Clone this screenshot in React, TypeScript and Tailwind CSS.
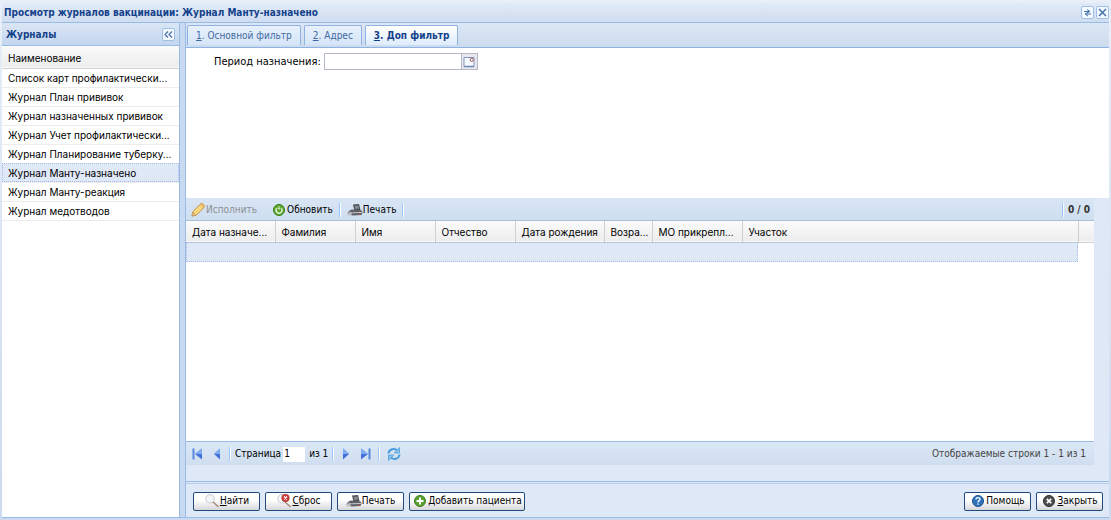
import { useState, type ReactNode } from "react";
import clsx from "clsx";

const journals = [
  "Список карт профилактически...",
  "Журнал План прививок",
  "Журнал назначенных прививок",
  "Журнал Учет профилактически...",
  "Журнал Планирование туберку...",
  "Журнал Манту-назначено",
  "Журнал Манту-реакция",
  "Журнал медотводов"
];

const tabs = [
  { key: "1", label: "Основной фильтр" },
  { key: "2", label: "Адрес" },
  { key: "3", label: "Доп фильтр" }
];

const columns = [
  { label: "Дата назначе...", width: "w-[89px]" },
  { label: "Фамилия", width: "w-20" },
  { label: "Имя", width: "w-20" },
  { label: "Отчество", width: "w-20" },
  { label: "Дата рождения", width: "w-[89px]" },
  { label: "Возра...", width: "w-12" },
  { label: "МО прикрепл...", width: "w-[90px]" },
  { label: "Участок", width: "w-auto" }
];

const uiFont = "font-['DejaVu_Sans_Condensed','DejaVu_Sans',sans-serif] [font-stretch:condensed]";
const gridFont = "font-[Inter,Arial,sans-serif]";

function PencilIcon() {
  return (
    <svg className="size-4 shrink-0" viewBox="0 0 16 16">
      <path d="M2 14l1.2-4.6L10.600 2q1.200-1 2.400.200l.9.900q1 1.200 0 2.300L6.500 12.900z" fill="#f8cf67" stroke="#c58a33" />
      <path d="M4 10.500l7.500-7.500M5.800 12l7.200-7.300" stroke="#fff0b5" />
      <path d="M2 14l.9-3.300 2.600 2.400z" fill="#f5e2c4" stroke="#b98243" strokeWidth=".6" />
      <path d="M10.300 2.600l3.300 3.200" stroke="#d8a35a" />
    </svg>
  );
}

function RefreshGreenIcon() {
  return (
    <svg className="size-4 shrink-0" viewBox="0 0 16 16">
      <circle cx="8" cy="8" r="5.500" fill="#59a32b" stroke="#3b7f1b" />
      <path d="M5.700 6.200A3 3 0 1 0 10.500 6.400" fill="none" stroke="#e9f7de" strokeWidth="1.300" />
      <path d="M8 4v3M6.300 5.700L8 7.400l1.700-1.700" fill="none" stroke="#d9f2c5" />
    </svg>
  );
}

function PrinterIcon() {
  return (
    <svg className="size-4 shrink-0" viewBox="0 0 16 16">
      <path d="M6 2.500l6-.5 1.500 6-6 1z" fill="#4c4f55" />
      <path d="M7.500 4l3.800-.4.800 3-3.600.5z" fill="#878c94" />
      <path d="M1 9.500l3.500-2 10 .7 1 2.300-1 2.500-9 .5L1 12z" fill="#5d6066" />
      <path d="M1 9.800l4.500 1 9.500-.3" fill="none" stroke="#c7cad0" />
      <path d="M.5 11l4 .3.500 1.700-4-.2z" fill="#eceef0" stroke="#85888d" strokeWidth=".5" />
      <circle cx="12.800" cy="12" r=".8" fill="#cc4a46" />
    </svg>
  );
}

function SearchIcon({ clear = false }: { clear?: boolean }) {
  return (
    <svg className="size-4 shrink-0" viewBox="0 0 16 16">
      <path d="M9 9l5 4.500" stroke="#a58c76" strokeWidth="1.600" strokeLinecap="round" />
      <circle cx="6" cy="5.800" r="4.200" fill="#f4f8fb" stroke="#c3c9cf" />
      {clear ? (
        <g>
          <circle cx="9.500" cy="5" r="3.800" fill="#cc3a3a" stroke="#a32a2a" strokeWidth=".6" />
          <path d="M8 3.500l3 3m0-3l-3 3" stroke="#fff" strokeWidth="1.300" />
        </g>
      ) : null}
    </svg>
  );
}

function RoundIcon({ fill, edge, children }: { fill: string; edge: string; children: ReactNode }) {
  return (
    <svg className="size-4 shrink-0" viewBox="0 0 16 16">
      <circle cx="8" cy="8" r="5.500" fill={fill} stroke={edge} />
      <g fill="none" stroke="#fff" strokeWidth="2">{children}</g>
    </svg>
  );
}

function ArrowIcon({ back = false, end = false }: { back?: boolean; end?: boolean }) {
  return (
    <svg className={clsx("size-4", back && "-scale-x-100")} viewBox="0 0 16 16">
      <path d={end ? "M3 2.500L10 8l-7 5.500z" : "M5 2.500L11 8l-6 5.500z"} fill="#4472dc" />
      <path d={end ? "M3 2.500L10 8H3z" : "M5 2.500L11 8H5z"} fill="#7fabf0" />
      {end ? <path d="M11.500 2.500v11" stroke="#5588dd" strokeWidth="2" /> : null}
    </svg>
  );
}

function ReloadIcon() {
  return (
    <svg className="size-4" viewBox="0 0 16 16" fill="none" stroke="#4a9ddb" strokeWidth="2">
      <path d="M2.500 7.500C3 3 8.500 1.500 11.500 4.800" />
      <path d="M13.500 8.500C13 13 7.500 14.500 4.500 11.200" />
      <path d="M13.500 1.500V7H8.300z M2.500 14.500V9h5.200z" fill="#8cc6ee" strokeWidth=".8" />
    </svg>
  );
}

function Separator() {
  return <span className="h-3.5 w-0.5 shrink-0 border-l border-[#98c8ff] bg-white" />;
}

function ToolButton({ icon, label, disabled }: { icon: ReactNode; label: string; disabled?: boolean }) {
  return (
    <button className="flex items-center text-black disabled:text-[#8c8f94]" disabled={disabled}>
      {icon}
      <span>{label}</span>
    </button>
  );
}

function FooterButton({ icon, label, hotkey, className }: { icon: ReactNode; label: string; hotkey?: boolean; className?: string }) {
  return (
    <button
      className={clsx(
        "flex h-[19px] items-center justify-center rounded-xs border border-[#1f4a7c] bg-linear-to-b from-white from-40% to-[#d8d8dc] whitespace-nowrap text-black",
        className
      )}
    >
      {icon}
      <span>{hotkey ? <><u>{label[0]}</u>{label.slice(1)}</> : label}</span>
    </button>
  );
}

function TitleTool({ label, children }: { label: string; children: ReactNode }) {
  return (
    <button aria-label={label} className="flex size-[13px] items-center justify-center rounded-xs border border-[#9dbfe8] bg-[#f4f9ff]">
      <svg className="size-[11px] shrink-0" viewBox="0 0 11 11" fill="none" stroke="#4a74ab">{children}</svg>
    </button>
  );
}

function JournalPanel() {
  const [selected, setSelected] = useState(5);
  return (
    <aside className="flex w-[178px] shrink-0 flex-col border-r border-[#99bbe8] bg-white">
      <header className="flex h-[23px] shrink-0 items-center justify-between border-b border-[#99bbe8] bg-linear-to-b from-[#dae6f4] to-[#c3d6ef] px-1 pt-px">
        <h2 className="font-bold text-[#15428b]">Журналы</h2>
        <TitleTool label="Свернуть">
          <path d="M5 2.500l-3 3 3 3M9 2.500l-3 3 3 3" strokeWidth="1.300" />
        </TitleTool>
      </header>
      <table className={clsx("w-full table-fixed text-left", gridFont)}>
        <thead>
          <tr className="h-[22px] border-b border-[#d0d0d0] bg-linear-to-b from-[#fbfbfb] to-[#eceded]">
            <th className="px-1.5 pt-0.5 font-normal">Наименование</th>
          </tr>
        </thead>
        <tbody>
          {journals.map((name, index) => (
            <tr
              key={name}
              aria-selected={index === selected}
              onClick={() => setSelected(index)}
              className={clsx("h-[19px] cursor-default border-b border-[#ededed]", index === selected && "bg-[#dfe8f6]")}
            >
              <td className={clsx("pl-1.5 whitespace-nowrap", index === selected && "outline-1 -outline-offset-1 outline-dotted outline-[#a3bae9]")}>{name}</td>
            </tr>
          ))}
        </tbody>
      </table>
    </aside>
  );
}

function FilterTabs() {
  const [active, setActive] = useState("3");
  return (
    <div role="tablist" className="flex h-[25px] shrink-0 items-start gap-[3px] border-b border-[#8db2e3] bg-linear-to-b from-[#dce7f5] to-[#ccdbee] pt-0.5 pl-px">
      {tabs.map((tab) => (
        <button
          key={tab.key}
          role="tab"
          aria-selected={tab.key === active}
          onClick={() => setActive(tab.key)}
          className={clsx(
            "h-5 rounded-t-xs border border-b-0 border-[#8db2e3] px-2",
            tab.key === active ? "bg-linear-to-b from-white to-[#deecfd] font-bold text-[#15428b]" : "bg-linear-to-b from-[#e8f1fc] to-[#d5e5f8] text-[#416aa3]"
          )}
        >
          <u>{tab.key}</u>. {tab.label}
        </button>
      ))}
    </div>
  );
}

function PatientGrid() {
  return (
    <table className={clsx("w-full table-fixed text-left", gridFont)}>
      <colgroup>
        {columns.map((column) => <col key={column.label} className={column.width} />)}
        <col className="w-4" />
      </colgroup>
      <thead>
        <tr className="h-[21px] border-b border-[#d0d0d0] bg-linear-to-b from-[#fbfbfb] to-[#ededed]">
          {columns.map((column) => (
            <th key={column.label} className="border-r border-[#cfcfcf] pt-0.5 pl-1.5 font-normal whitespace-nowrap">{column.label}</th>
          ))}
          <td />
        </tr>
      </thead>
      <tbody>
        <tr className="h-5">
          <td colSpan={columns.length} className="bg-[#dfe8f6] outline-1 -outline-offset-1 outline-dotted outline-[#a3bae9]" />
          <td />
        </tr>
      </tbody>
    </table>
  );
}

function PagingBar() {
  return (
    <div className="flex h-6 shrink-0 items-center justify-between border-t border-[#99bbe8] bg-linear-to-b from-[#dbe7f5] to-[#cfdeef] pt-px pr-2 pl-[3px]">
      <div className="flex items-center">
        <button aria-label="Первая страница"><ArrowIcon back end /></button>
        <button aria-label="Предыдущая страница" className="mx-1"><ArrowIcon back /></button>
        <Separator />
        <label htmlFor="page" className="ml-1">Страница</label>
        <input id="page" defaultValue="1" className="mr-1 ml-0.5 h-[15px] w-[22px] bg-white px-px" />
        <span className="mr-1">из 1</span>
        <Separator />
        <button aria-label="Следующая страница" className="ml-1"><ArrowIcon /></button>
        <button aria-label="Последняя страница" className="mx-1"><ArrowIcon end /></button>
        <Separator />
        <button aria-label="Обновить список" className="ml-1.5"><ReloadIcon /></button>
      </div>
      <span className="text-[#444]">Отображаемые строки 1 - 1 из 1</span>
    </div>
  );
}

export default function App() {
  return (
    <div className={clsx("flex h-screen flex-col bg-linear-to-b from-[#e8eff8] to-[#ccd9ee] px-0.5 pt-[3px] pb-0.5 text-[10px] leading-4 text-black", uiFont)}>
      <header className="flex h-5 shrink-0 items-center justify-between border-b border-[#99bbe8] bg-linear-to-b from-[#e1eaf7] to-[#d0ddef] pl-0.5">
        <h1 className="font-bold text-[#15428b]">Просмотр журналов вакцинации: Журнал Манту-назначено</h1>
        <div className="flex gap-0.5">
          <TitleTool label="Обновить">
            <path d="M2 4.500h5M5 2.500l3 2-3 1.500M9 7H4M6 5.500L3 7l3 2" />
          </TitleTool>
          <TitleTool label="Закрыть окно">
            <path d="M2 2l7 7M9 2L2 9" strokeWidth="1.600" />
          </TitleTool>
        </div>
      </header>
      <div className="flex min-h-0 grow gap-[5px] border-b border-[#99bbe8] bg-[#c9daf0]">
        <JournalPanel />
        <main className="flex min-w-0 grow flex-col border-l border-[#99bbe8] bg-[#dfe8f6]">
          <FilterTabs />
          <section className="flex h-[150px] shrink-0 items-start bg-white pt-[5px] pl-7 text-[11px]">
            <label htmlFor="period" className="mr-[3px] leading-[18px]">Период назначения:</label>
            <input id="period" className="h-[17px] w-[138px] border border-[#b5b8c8] bg-white px-1" />
            <button aria-label="Выбрать период" className="flex h-[17px] w-4 items-center justify-center border border-l-0 border-[#b5b8c8] bg-[#e8e8ec]">
              <svg className="h-3 w-3 shrink-0" viewBox="0 0 12 12" fill="none">
                <path d="M1 1.500h10v9H1z" fill="#f7faff" stroke="#8396c3" />
                <path d="M1 10.500h10" stroke="#7187b7" strokeWidth="1.500" />
                <circle cx="8.800" cy="3.800" r="1.600" fill="#fff" stroke="#9c5356" />
              </svg>
            </button>
          </section>
          <section className="mr-[15px] flex min-h-0 grow flex-col">
            <div className="flex h-[23px] shrink-0 items-center justify-between border-b border-[#a9bfd3] bg-linear-to-b from-[#d8e5f4] to-[#cedff0] px-1 pt-0.5">
              <div className="flex items-center gap-1.5">
                <ToolButton icon={<PencilIcon />} label="Исполнить" disabled />
                <span className="w-0.5" />
                <ToolButton icon={<RefreshGreenIcon />} label="Обновить" />
                <Separator />
                <ToolButton icon={<PrinterIcon />} label="Печать" />
                <Separator />
              </div>
              <div className="flex items-center gap-1 font-bold text-[#333]">
                <Separator />
                <span>0 / 0</span>
              </div>
            </div>
            <div className="min-h-0 grow bg-white"><PatientGrid /></div>
            <PagingBar />
          </section>
          <div className="h-[17px] shrink-0 border-b border-[#99bbe8]" />
          <footer className="mt-px flex h-[34px] shrink-0 items-center justify-between border-t border-[#b5cdec] pt-px pr-1.5 pl-[7px]">
            <div className="flex gap-[5px]">
              <FooterButton className="w-[67px]" icon={<SearchIcon />} label="Найти" hotkey />
              <FooterButton className="w-[67px]" icon={<SearchIcon clear />} label="Сброс" hotkey />
              <FooterButton className="w-[67px]" icon={<PrinterIcon />} label="Печать" />
              <FooterButton
                className="w-[116px]"
                icon={<RoundIcon fill="#5aa130" edge="#3f7d22"><path d="M8 4.500v7M4.500 8h7" /></RoundIcon>}
                label="Добавить пациента"
              />
            </div>
            <div className="flex gap-[5px]">
              <FooterButton
                className="w-[67px]"
                icon={<RoundIcon fill="#2f73b8" edge="#1d5290"><path d="M6 6.500C6 4 10 4 10 6.200 10 7.600 8 7.600 8 9.400M8 10.500v1.300" strokeWidth="1.400" /></RoundIcon>}
                label="Помощь"
              />
              <FooterButton
                className="w-[67px]"
                icon={<RoundIcon fill="#4d4d50" edge="#2f2f33"><path d="M5.800 5.800l4.400 4.400m0-4.400l-4.400 4.400" strokeWidth="1.700" /></RoundIcon>}
                label="Закрыть"
                hotkey
              />
            </div>
          </footer>
        </main>
      </div>
    </div>
  );
}
